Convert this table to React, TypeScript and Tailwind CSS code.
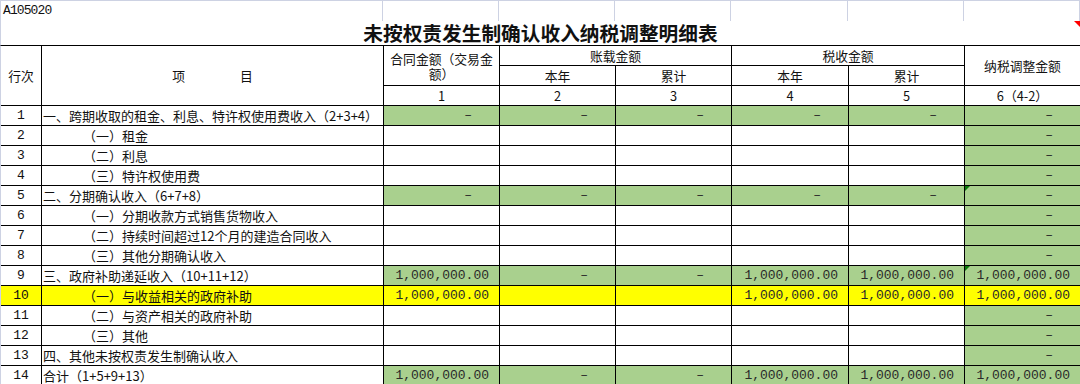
import React from "react";

type Bg = "g" | "w" | "y";
type Cell = { v: string; bg: Bg; tri?: boolean };
type Row = { n: number; label: string; indent?: boolean; rowBg?: Bg; cells: Cell[] };

const NUM = "1,000,000.00";
const DASH = "–";
const d = (bg: Bg = "g", tri = false): Cell => ({ v: DASH, bg, tri });
const e = (bg: Bg = "w"): Cell => ({ v: "", bg });
const n = (bg: Bg = "g", tri = false): Cell => ({ v: NUM, bg, tri });

const onlyLast = (): Cell[] => [e(), e(), e(), e(), e(), d()];

const rows: Row[] = [
  { n: 1, label: "一、跨期收取的租金、利息、特许权使用费收入（2+3+4）", cells: [d(), d(), d(), d(), d(), d()] },
  { n: 2, label: "（一）租金", indent: true, cells: onlyLast() },
  { n: 3, label: "（二）利息", indent: true, cells: onlyLast() },
  { n: 4, label: "（三）特许权使用费", indent: true, cells: onlyLast() },
  { n: 5, label: "二、分期确认收入（6+7+8）", cells: [d(), d(), d(), d(), d(), d("g", true)] },
  { n: 6, label: "（一）分期收款方式销售货物收入", indent: true, cells: onlyLast() },
  { n: 7, label: "（二）持续时间超过12个月的建造合同收入", indent: true, cells: onlyLast() },
  { n: 8, label: "（三）其他分期确认收入", indent: true, cells: onlyLast() },
  { n: 9, label: "三、政府补助递延收入（10+11+12）", cells: [n(), d(), d(), n(), n(), n("g", true)] },
  {
    n: 10,
    label: "（一）与收益相关的政府补助",
    indent: true,
    rowBg: "y",
    cells: [n("y"), e("y"), e("y"), n("y"), n("y"), n("y")],
  },
  { n: 11, label: "（二）与资产相关的政府补助", indent: true, cells: onlyLast() },
  { n: 12, label: "（三）其他", indent: true, cells: onlyLast() },
  { n: 13, label: "四、其他未按权责发生制确认收入", cells: onlyLast() },
  { n: 14, label: "合计（1+5+9+13）", cells: [n(), d(), d(), n(), n(), n()] },
];

const bgClass = (bg: Bg) =>
  bg === "g" ? "bg-[#a9d08e]" : bg === "y" ? "bg-[#ffff00]" : "bg-white";

const cjk = "font-['Noto_Sans_CJK_SC',sans-serif]";
const mono = "font-['Liberation_Mono',monospace]";

function HeadCell({ className, children }: { className: string; children: React.ReactNode }) {
  return (
    <div
      className={`bg-white flex items-center justify-center text-center text-[12.8px] leading-[15px] text-[#111] ${cjk} ${className}`}
    >
      {children}
    </div>
  );
}

export default function App() {
  return (
    <div className="w-[1080px] h-[384px] overflow-hidden bg-white">
      {/* sheet row with cell reference */}
      <div className="grid grid-cols-[381px_115px_115px_115px_116px_115px_115px] gap-px h-[21px] bg-[#cdd2e3] border-t border-b border-l border-[#cdd2e3]">
        <div className={`bg-white flex items-center pl-[2px] text-[13px] tracking-[-0.9px] text-[#111] ${mono}`}>
          A105020
        </div>
        <div className="bg-white" />
        <div className="bg-white" />
        <div className="bg-white" />
        <div className="bg-white" />
        <div className="bg-white" />
        <div className="bg-white" />
      </div>

      {/* title */}
      <div className="relative h-[24px] border-l border-[#cdd2e3] flex items-center justify-center">
        <span className={`text-[19.7px] font-bold leading-none text-[#111] ${cjk}`}>
          未按权责发生制确认收入纳税调整明细表
        </span>
        <div className="absolute top-0 right-0 w-[6px] h-[6px] bg-[#ff0000] [clip-path:polygon(0_0,100%_0,100%_100%)]" />
      </div>

      {/* table */}
      <div className="grid grid-cols-[40px_341px_115px_115px_115px_116px_115px_115px] grid-rows-[repeat(17,19px)] gap-px bg-black border-t border-black border-l border-l-[#cdd2e3]">
        <HeadCell className="col-start-1 row-start-1 row-span-3">行次</HeadCell>
        <HeadCell className="col-start-2 row-start-1 row-span-3">
          <div className="flex gap-[55px]">
            <span>项</span>
            <span>目</span>
          </div>
        </HeadCell>
        <HeadCell className="col-start-3 row-start-1 row-span-2 px-[5px]">合同金额（交易金额）</HeadCell>
        <HeadCell className="col-start-4 row-start-1 col-span-2">账载金额</HeadCell>
        <HeadCell className="col-start-6 row-start-1 col-span-2">税收金额</HeadCell>
        <HeadCell className="col-start-8 row-start-1 row-span-2">纳税调整金额</HeadCell>
        <HeadCell className="col-start-4 row-start-2">本年</HeadCell>
        <HeadCell className="col-start-5 row-start-2">累计</HeadCell>
        <HeadCell className="col-start-6 row-start-2">本年</HeadCell>
        <HeadCell className="col-start-7 row-start-2">累计</HeadCell>
        <HeadCell className="col-start-3 row-start-3">1</HeadCell>
        <HeadCell className="col-start-4 row-start-3">2</HeadCell>
        <HeadCell className="col-start-5 row-start-3">3</HeadCell>
        <HeadCell className="col-start-6 row-start-3">4</HeadCell>
        <HeadCell className="col-start-7 row-start-3">5</HeadCell>
        <HeadCell className="col-start-8 row-start-3">6（4-2）</HeadCell>

        {rows.map((r) => (
          <React.Fragment key={r.n}>
            <div
              className={`${bgClass(r.rowBg ?? "w")} flex items-center justify-center text-[13px] text-[#111] ${mono}`}
            >
              {r.n}
            </div>
            <div
              className={`${bgClass(r.rowBg ?? "w")} flex items-center whitespace-nowrap text-[13px] leading-none text-[#111] ${cjk} ${
                r.indent ? "pl-[41px]" : "pl-px"
              }`}
            >
              {r.label}
            </div>
            {r.cells.map((c, i) => (
              <div
                key={i}
                className={`${bgClass(c.bg)} relative flex items-center justify-end text-[13px] leading-none text-[#2a2a2a] ${mono} ${
                  c.v === DASH ? "pr-[27px]" : "pr-[10px]"
                }`}
              >
                {c.tri && (
                  <div className="absolute top-0 left-0 w-[5px] h-[5px] bg-[#0b7a0b] [clip-path:polygon(0_0,100%_0,0_100%)]" />
                )}
                {c.v}
              </div>
            ))}
          </React.Fragment>
        ))}
      </div>
    </div>
  );
}
